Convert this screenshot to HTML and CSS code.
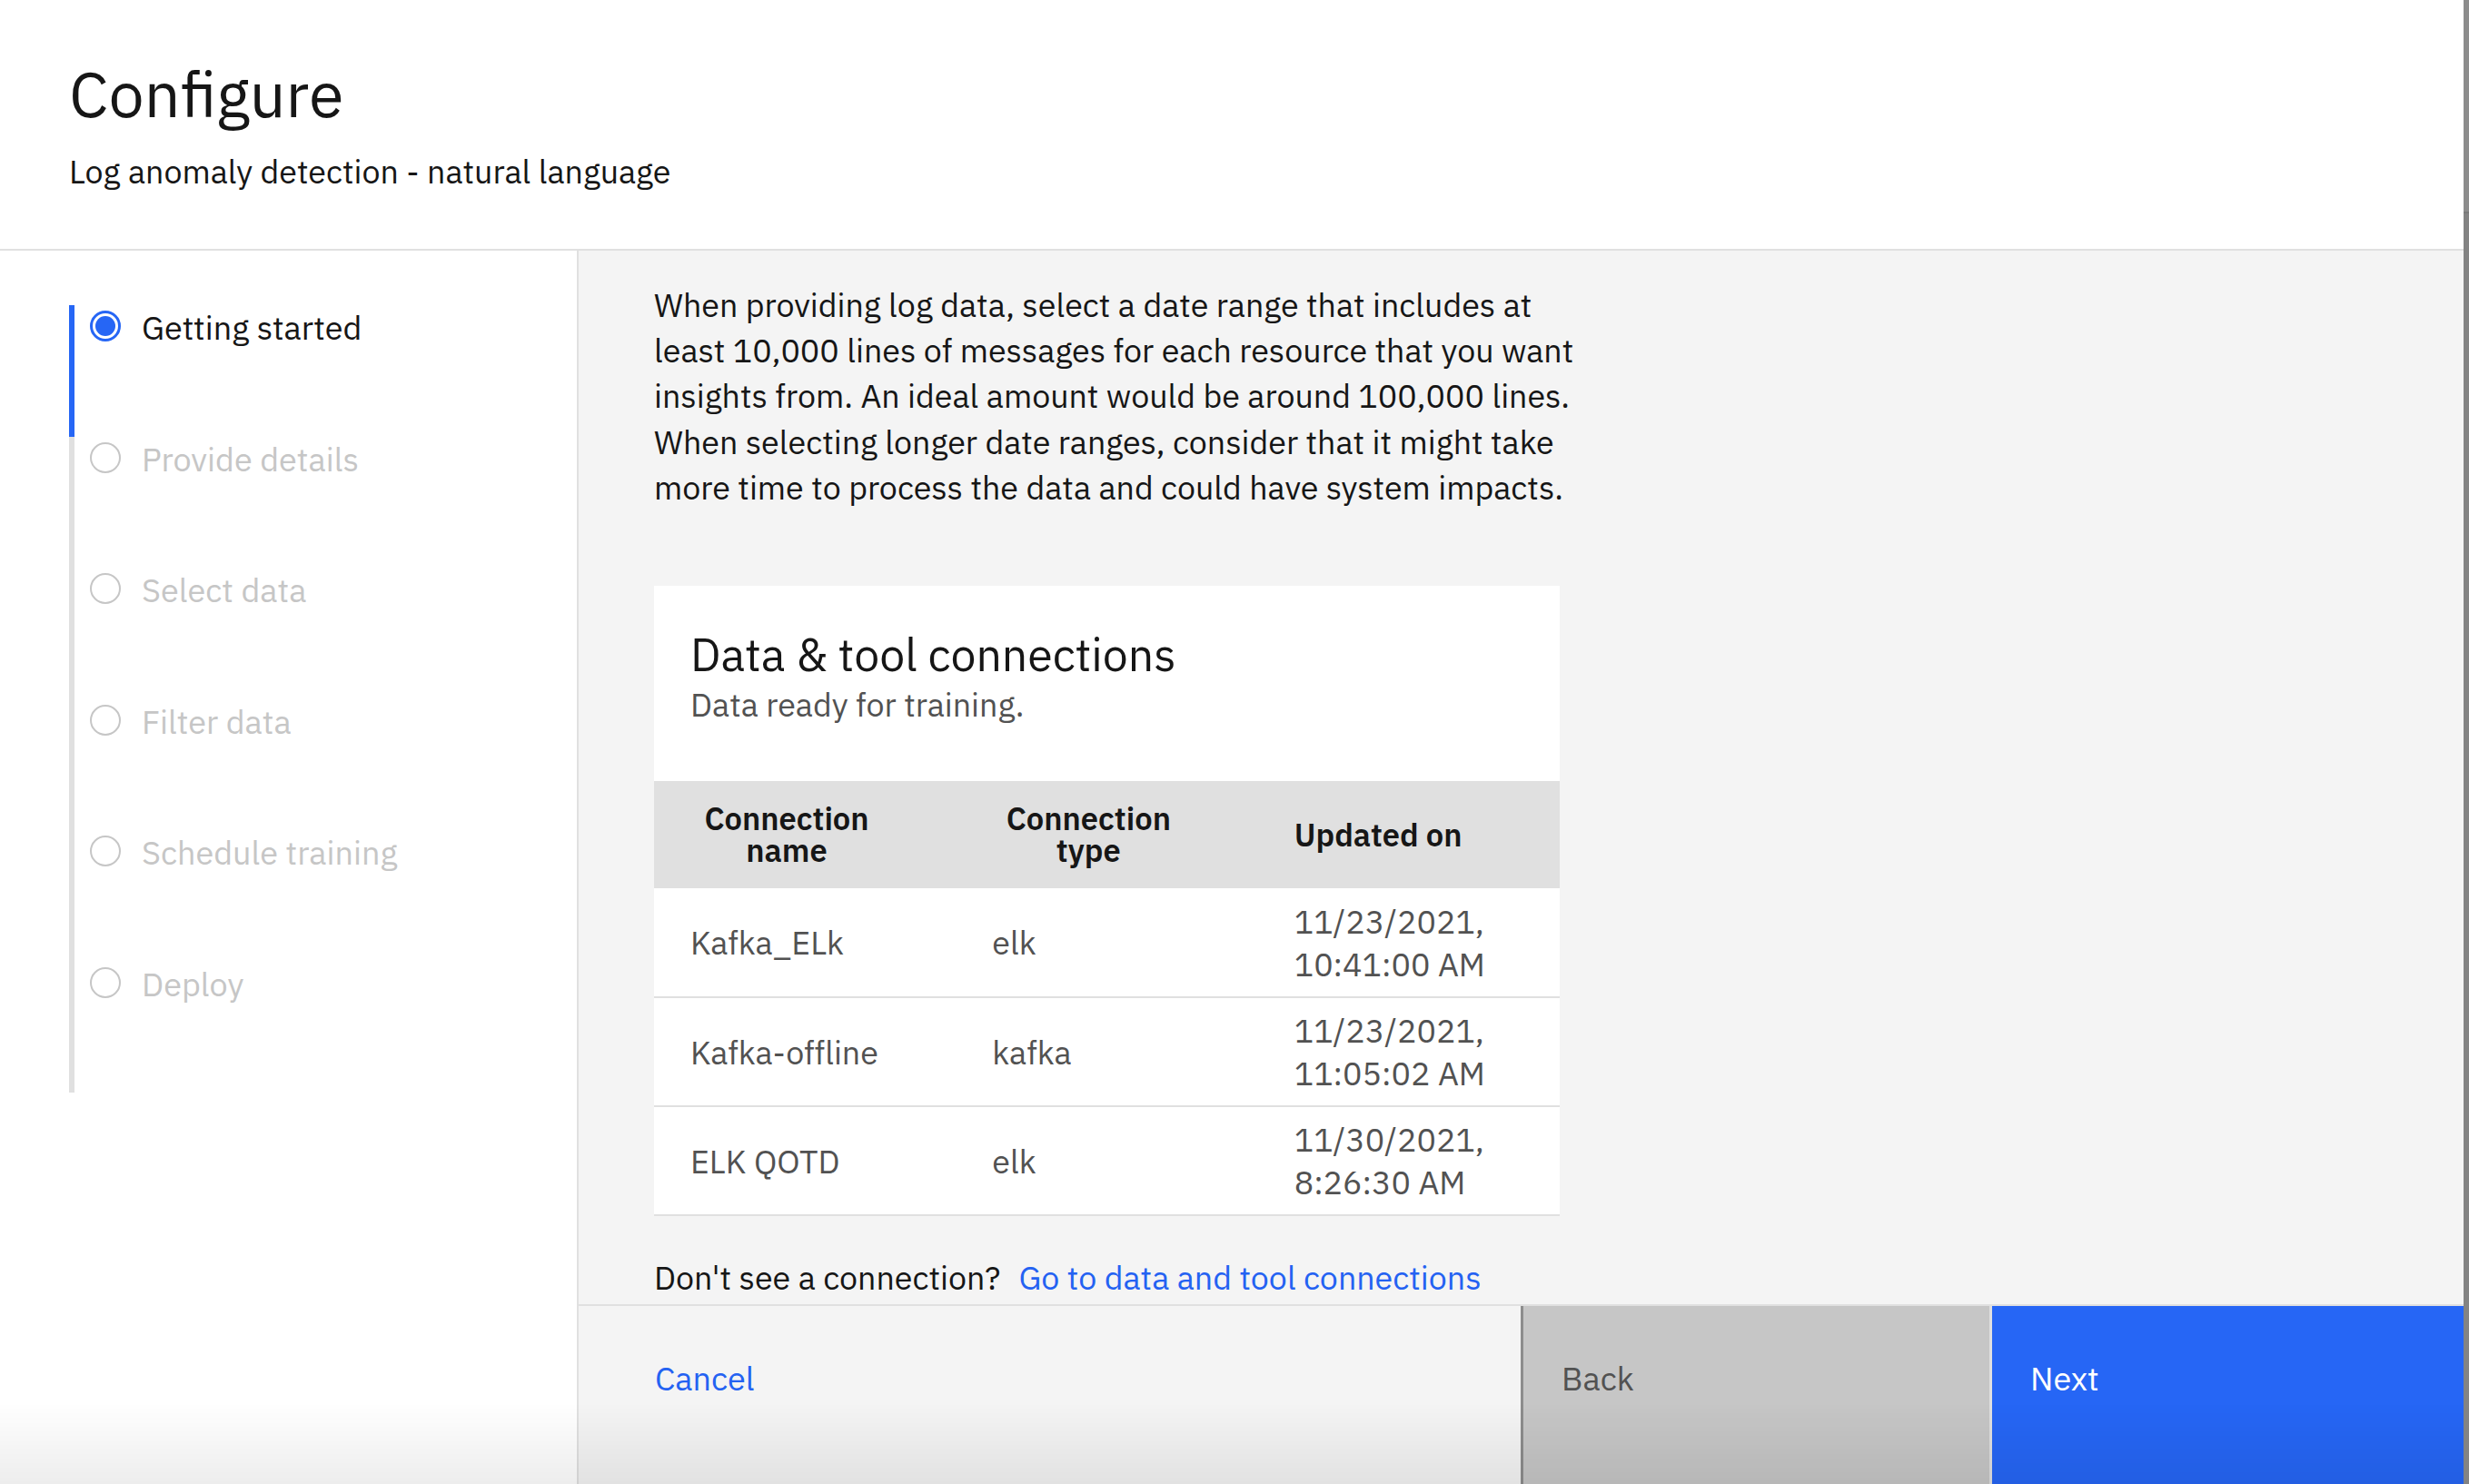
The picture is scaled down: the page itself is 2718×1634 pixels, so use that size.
FILE: index.html
```html
<!DOCTYPE html>
<html lang="en">
<head>
<meta charset="utf-8">
<title>Configure</title>
<link rel="stylesheet" href="styles.css">
</head>
<body>
<div class="app">
  <div class="window">
    <header class="page-header">
      <h1 class="page-title">Configure</h1>
      <p class="page-subtitle">Log anomaly detection - natural language</p>
    </header>
    <div class="body">
      <nav class="sidebar">
        <ul class="steps">
          <li class="step step-current">
            <svg class="step-icon" viewBox="0 0 36 36"><circle cx="18" cy="18" r="15.5" fill="none" stroke="#2666f5" stroke-width="3"/><circle cx="18" cy="18" r="11" fill="#2666f5"/></svg>
            <span class="step-label">Getting started</span>
          </li>
          <li class="step">
            <svg class="step-icon" viewBox="0 0 36 36"><circle cx="18" cy="18" r="16" fill="none" stroke="#c6c6c6" stroke-width="2"/></svg>
            <span class="step-label">Provide details</span>
          </li>
          <li class="step">
            <svg class="step-icon" viewBox="0 0 36 36"><circle cx="18" cy="18" r="16" fill="none" stroke="#c6c6c6" stroke-width="2"/></svg>
            <span class="step-label">Select data</span>
          </li>
          <li class="step">
            <svg class="step-icon" viewBox="0 0 36 36"><circle cx="18" cy="18" r="16" fill="none" stroke="#c6c6c6" stroke-width="2"/></svg>
            <span class="step-label">Filter data</span>
          </li>
          <li class="step">
            <svg class="step-icon" viewBox="0 0 36 36"><circle cx="18" cy="18" r="16" fill="none" stroke="#c6c6c6" stroke-width="2"/></svg>
            <span class="step-label">Schedule training</span>
          </li>
          <li class="step">
            <svg class="step-icon" viewBox="0 0 36 36"><circle cx="18" cy="18" r="16" fill="none" stroke="#c6c6c6" stroke-width="2"/></svg>
            <span class="step-label">Deploy</span>
          </li>
        </ul>
      </nav>
      <main class="content">
        <div class="content-scroll">
          <p class="intro">When providing log data, select a date range that includes at<br>least 10,000 lines of messages for each resource that you want<br>insights from. An ideal amount would be around 100,000 lines.<br>When selecting longer date ranges, consider that it might take<br>more time to process the data and could have system impacts.</p>
          <section class="card">
            <div class="card-head">
              <h2 class="card-title">Data &amp; tool connections</h2>
              <p class="card-desc">Data ready for training.</p>
            </div>
            <table class="conn-table">
              <thead>
                <tr>
                  <th><span class="th-box">Connection name</span></th>
                  <th><span class="th-box">Connection type</span></th>
                  <th><span class="th-left">Updated on</span></th>
                </tr>
              </thead>
              <tbody>
                <tr>
                  <td>Kafka_ELk</td>
                  <td>elk</td>
                  <td>11/23/2021,<br>10:41:00 AM</td>
                </tr>
                <tr>
                  <td>Kafka-offline</td>
                  <td>kafka</td>
                  <td>11/23/2021,<br>11:05:02 AM</td>
                </tr>
                <tr>
                  <td>ELK QOTD</td>
                  <td>elk</td>
                  <td>11/30/2021,<br>8:26:30 AM</td>
                </tr>
              </tbody>
            </table>
          </section>
          <p class="help">Don't see a connection?<a class="link" href="#">Go to data and tool connections</a></p>
        </div>
        <footer class="footer">
          <div class="footer-left"><a class="btn-ghost" href="#">Cancel</a></div>
          <button class="btn btn-secondary" type="button">Back</button>
          <button class="btn btn-primary" type="button">Next</button>
        </footer>
      </main>
    </div>
  </div>
  <div class="edge"><div class="edge-top"></div><div class="edge-bottom"></div></div>
  <div class="bottom-shade"></div>
</div>
</body>
</html>
```

FILE: styles.css
```css
* { box-sizing: border-box; }

html, body {
  margin: 0;
  padding: 0;
  height: 100%;
}

body {
  font-family: "IBM Plex Sans", Roboto, "Liberation Sans", sans-serif;
  color: #161616;
  background: #ffffff;
  overflow: hidden;
}

.app {
  display: flex;
  height: 1634px;
  width: 2718px;
}

.window {
  flex: 1;
  display: flex;
  flex-direction: column;
  min-width: 0;
}

.edge {
  width: 6px;
  display: flex;
  flex-direction: column;
}
.edge-top { height: 235px; background: #8c8c8c; border-bottom: 2px solid #7a7a7a; }
.edge-bottom { flex: 1; background: #838383; }

/* header */
.page-header {
  height: 276px;
  border-bottom: 2px solid #e0e0e0;
  padding: 60px 0 0 76px;
  background: #ffffff;
}
.page-title {
  margin: 0;
  font-size: 70px;
  line-height: 86px;
  font-weight: 400;
  letter-spacing: 0;
}
.page-subtitle {
  margin: 21px 0 0;
  font-size: 35.8px;
  line-height: 44px;
  font-weight: 400;
}

/* body */
.body {
  flex: 1;
  display: flex;
  min-height: 0;
}

.sidebar {
  width: 637px;
  flex: none;
  background: #ffffff;
  border-right: 2px solid #e0e0e0;
  padding: 60px 0 0 76px;
}

.steps {
  list-style: none;
  margin: 0;
  padding: 0;
}
.step {
  height: 144.5px;
  border-left: 6px solid #e0e0e0;
  display: flex;
  align-items: flex-start;
  padding: 5px 0 0 16px;
}
.step-current { border-left-color: #2666f5; }
.step-icon {
  width: 36px;
  height: 36px;
  flex: none;
}
.step-label {
  margin-left: 22px;
  font-size: 36px;
  line-height: 40px;
  color: #c6c6c6;
}
.step-current .step-label { color: #161616; }

/* content */
.content {
  flex: 1;
  display: flex;
  flex-direction: column;
  background: #f4f4f4;
  min-width: 0;
}
.content-scroll {
  flex: 1;
  padding: 35px 0 0 83px;
  overflow: hidden;
}
.intro {
  margin: 0;
  font-size: 35.8px;
  line-height: 50.2px;
  color: #161616;
}

.card {
  margin-top: 83px;
  width: 997px;
  background: #ffffff;
}
.card-head {
  padding: 47px 40px 60px;
}
.card-title {
  margin: 0;
  font-size: 50px;
  line-height: 58px;
  font-weight: 400;
}
.card-desc {
  margin: 2px 0 0;
  font-size: 35.8px;
  line-height: 48px;
  color: #525252;
}

.conn-table {
  width: 100%;
  border-collapse: collapse;
  table-layout: fixed;
}
.conn-table th {
  background: #e0e0e0;
  height: 118px;
  padding: 0 0 0 40px;
  text-align: left;
  font-size: 34.5px;
  line-height: 35px;
  font-weight: 600;
  color: #161616;
}
.th-box {
  display: inline-block;
  width: 212px;
  text-align: center;
}
.th-left { display: inline-block; }
.conn-table td {
  height: 120px;
  padding: 0 0 0 40px;
  border-bottom: 2px solid #e0e0e0;
  font-size: 35.8px;
  line-height: 47px;
  color: #525252;
  vertical-align: middle;
}

.help {
  margin: 43px 0 0;
  font-size: 35.8px;
  line-height: 50px;
  color: #161616;
}
.link {
  margin-left: 20px;
  color: #2462f2;
  text-decoration: none;
}

/* footer */
.footer {
  height: 198px;
  flex: none;
  border-top: 2px solid #e0e0e0;
  display: flex;
  background: #f4f4f4;
}
.footer-left {
  flex: 1;
  padding: 55px 0 0 84px;
}
.btn-ghost {
  font-size: 36px;
  line-height: 50px;
  color: #2462f2;
  text-decoration: none;
}
.btn {
  width: 519px;
  border: none;
  margin: 0;
  font-family: inherit;
  font-size: 36px;
  line-height: 50px;
  text-align: left;
  padding: 55px 0 0 42px;
  display: flex;
  align-items: flex-start;
  align-self: stretch;
  cursor: pointer;
}
.btn-secondary {
  background: #c6c6c6;
  color: #525252;
  border-left: 3px solid #8d8d8d;
  border-right: 3px solid #e0e0e0;
}
.btn-primary {
  background: #2666f5;
  color: #ffffff;
}

.bottom-shade {
  position: fixed;
  left: 0;
  right: 6px;
  bottom: 0;
  height: 90px;
  background: linear-gradient(to bottom, rgba(0,0,0,0), rgba(0,0,0,0.07));
  pointer-events: none;
}
```
